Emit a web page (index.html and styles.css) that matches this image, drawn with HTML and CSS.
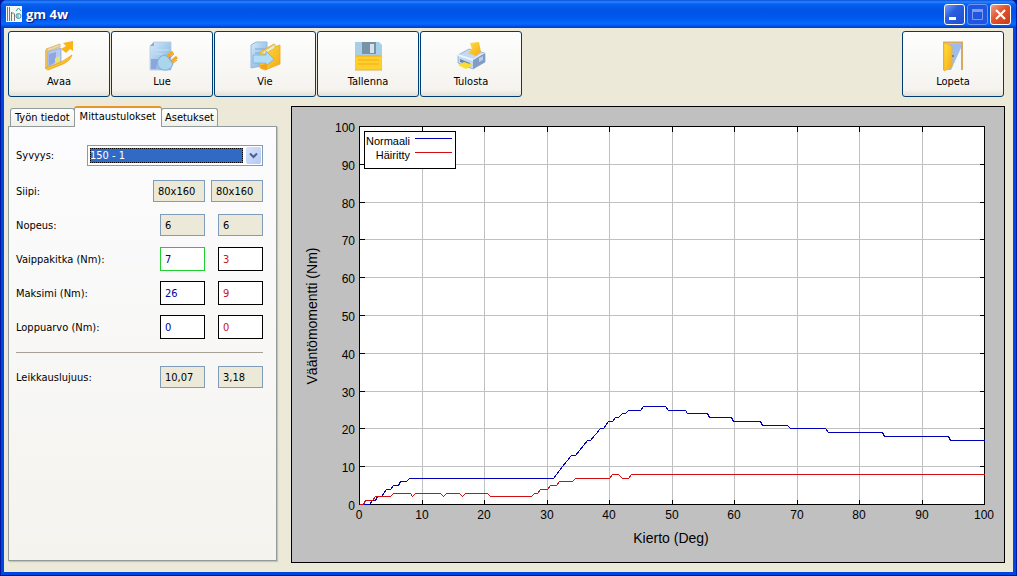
FILE: index.html
```
<!DOCTYPE html>
<html lang="fi">
<head>
  <meta charset="UTF-8">
  <meta name="viewport" content="width=device-width, initial-scale=1.0">
  <title>gm 4w</title>
  <link rel="stylesheet" href="styles.css">
</head>
<body>

  <header class="titlebar">
    <svg class="app-icon" width="16" height="16" viewBox="0 0 16 16">
      <rect width="16" height="16" fill="#f4f6f4"/>
      <path d="M1.500 1v14M3.500 1v14M5.500 6v9M8.500 8v7" stroke="#777" fill="none"/>
      <path d="M5.500 8q2-3 3 1" stroke="#777" fill="none"/>
      <circle cx="12.500" cy="10" r="2.500" stroke="#3d9a9a" fill="none"/>
      <path d="M10 5l2.500-3L15 5M12 8v4" stroke="#3d9a9a" fill="none"/>
    </svg>
    <h1>gm 4w</h1>
    <div class="window-buttons">
      <button type="button" aria-label="Pienennä">
        <svg width="19" height="19" viewBox="0 0 19 19"><rect x="4" y="12" width="7" height="3" fill="#fff"/></svg>
      </button>
      <button type="button" class="disabled" aria-label="Suurenna" disabled>
        <svg width="19" height="19" viewBox="0 0 19 19"><path d="M4.500 5v9.500h10V5" fill="none" stroke="#7c9cf0"/><rect x="4" y="4" width="11" height="3" fill="#7c9cf0"/></svg>
      </button>
      <button type="button" class="close" aria-label="Sulje">
        <svg width="19" height="19" viewBox="0 0 19 19"><path d="M5 5l9 9M14 5l-9 9" stroke="#fff" stroke-width="2.200"/></svg>
      </button>
    </div>
  </header>

  <nav class="toolbar">
    <button type="button">
      <svg width="32" height="32" viewBox="0 0 32 32">
        <defs>
          <linearGradient id="yellow" x1="0" y1="0" x2="1" y2="1"><stop offset="0" stop-color="#ffe23c"/><stop offset="1" stop-color="#f5a81c"/></linearGradient>
          <linearGradient id="blue" x1="0" y1="0" x2="1" y2="1"><stop offset="0" stop-color="#d3ebf8"/><stop offset="1" stop-color="#7aaade"/></linearGradient>
        </defs>
        <path d="M2 10l3-1v20l-3-1z" fill="#f0c050"/>
        <path d="M3 9l14-5v3L6 11z" fill="#ecd9a0" stroke="#cdb070" stroke-width=".8"/>
        <path d="M5 12l13-4v15L5 28z" fill="#b4cbf2" stroke="#94a4dc" stroke-width=".8"/>
        <path d="M6 14l7-2v10l-7 4z" fill="#8fa6e6"/>
        <path d="M12 18l5-2v6l-5 3z" fill="#e6e36c"/>
        <path d="M2 28l3 2 15-6q7-3 9-9-9 7-18 10z" fill="url(#yellow)" stroke="#eda21c" stroke-width=".8"/>
        <path d="M18 9l5-3-3-3 10-2v10l-3-2-4 4z" fill="#fbb416"/>
      </svg>
      <span>Avaa</span>
    </button>
    <button type="button">
      <svg width="32" height="32" viewBox="0 0 32 32">
        <path d="M4 6l4-4h17v28H4z" fill="url(#blue)" stroke="#b4cbe8" stroke-width=".8"/>
        <path d="M4 6h4V2z" fill="#94a9d0"/>
        <path d="M9 10h14M9 14h8" stroke="#c6e2f2"/>
        <path d="M5 19h7l-2 10H5z" fill="#8ea5dc"/>
        <path d="M21 17l6-5M25 22l6-5" stroke="#f5a91c" stroke-width="3"/>
        <path d="M22 19l6-5M26 24l5-4" stroke="#d86e2c" stroke-width=".8"/>
        <path d="M14 17q3-3 7-1l6 8q-1 5-6 6-6 1-9-4-2-5 2-9z" fill="#a9d5ed" stroke="#75a7d5" stroke-width=".8"/>
      </svg>
      <span>Lue</span>
    </button>
    <button type="button">
      <svg width="32" height="32" viewBox="0 0 32 32">
        <path d="M2 5l5-3h11v23l-16 3z" fill="url(#blue)" stroke="#9ab8e0"/>
        <path d="M6 9h11M6 13h8" stroke="#78a8dc"/>
        <path d="M11 12l14-8v3l6-2v19l-15 6-5-2z" fill="url(#yellow)" stroke="#eda822" stroke-width=".8"/>
        <path d="M12 13l14-9v4l-10 6z" fill="#ececc8" stroke="#d7b55c" stroke-width=".8"/>
        <path d="M4 15h13v-4l8 8-8 7v-3H4z" fill="#b2ddf6" stroke="#79aee1" stroke-width=".8"/>
        <path d="M12 25l6-1v6l-6-2z" fill="#f2a31b"/>
      </svg>
      <span>Vie</span>
    </button>
    <button type="button">
      <svg width="32" height="32" viewBox="0 0 32 32">
        <path d="M3 2h24l3 3v25H3z" fill="#a8cfe8"/>
        <path d="M10 2h14v12H10z" fill="#7892a8"/>
        <path d="M18 4h4v9h-4z" fill="#d5e2e9"/>
        <path d="M4 16h25v14H4z" fill="#ffd02b"/>
        <path d="M4 16h25M6 20h21M6 24h21" stroke="#f5a91c"/>
        <path d="M3 30h27" stroke="#d9b050"/>
      </svg>
      <span>Tallenna</span>
    </button>
    <button type="button">
      <svg width="32" height="32" viewBox="0 0 32 32">
        <path d="M3 15l11-6 16 4v9l-12 7L3 23z" fill="#c3d8f2" stroke="#90abd4" stroke-width=".8"/>
        <path d="M15 3l9-1 2 10-5 4-8-3 4-4z" fill="url(#yellow)"/>
        <path d="M3 15l15 5 12-7" fill="none" stroke="#e8f7fb" stroke-width="2"/>
        <path d="M18 20v9l12-7v-9z" fill="#829cc5"/>
        <path d="M24 18l4-2v4l-4 2z" fill="#b8cde7"/>
        <path d="M5 19l10 4v3L5 22z" fill="#6a85b0"/>
        <path d="M3 25l6-3 9 3-7 4z" fill="#f8dc2e"/>
      </svg>
      <span>Tulosta</span>
    </button>
    <button type="button" class="quit">
      <svg width="32" height="32" viewBox="0 0 32 32">
        <path d="M7 30V2.500h18V30" fill="url(#blue)" stroke="#d9a960" stroke-width="2"/>
        <path d="M8 4h16v6L12 28H8z" fill="#9dbcf0"/>
        <path d="M24 8v22H14z" fill="#f2f8fc"/>
        <path d="M7 3l8 3v21l-8 4z" fill="url(#yellow)" stroke="#f2b129" stroke-width=".8"/>
        <circle cx="16" cy="16" r="1" fill="#866e45"/>
      </svg>
      <span>Lopeta</span>
    </button>
  </nav>

  <main class="content">
    <section class="sidebar">
      <div class="tabs" role="tablist">
        <button type="button" role="tab">Työn tiedot</button>
        <button type="button" role="tab" class="active" aria-selected="true">Mittaustulokset</button>
        <button type="button" role="tab">Asetukset</button>
      </div>
      <form class="panel">
        <div class="row depth">
          <label for="syvyys">Syvyys:</label>
          <div class="combo">
            <select id="syvyys"><option>150 - 1</option></select>
            <svg class="combo-arrow" width="15" height="17" viewBox="0 0 15 17"><path d="M4 6.500l3.500 3.500L11 6.500" fill="none" stroke="#4d6185" stroke-width="2"/></svg>
          </div>
        </div>
        <div class="row wide">
          <label for="siipi-1">Siipi:</label>
          <input id="siipi-1" type="text" value="80x160" readonly>
          <input type="text" value="80x160" aria-label="Siipi, häiritty" readonly>
        </div>
        <div class="row">
          <label for="nopeus-1">Nopeus:</label>
          <input id="nopeus-1" type="text" value="6" readonly>
          <input type="text" value="6" aria-label="Nopeus, häiritty" readonly>
        </div>
        <div class="row">
          <label for="vaippa-1">Vaippakitka (Nm):</label>
          <input id="vaippa-1" class="normal selected" type="text" value="7">
          <input class="disturbed" type="text" value="3" aria-label="Vaippakitka, häiritty">
        </div>
        <div class="row">
          <label for="maksimi-1">Maksimi (Nm):</label>
          <input id="maksimi-1" class="normal" type="text" value="26">
          <input class="disturbed" type="text" value="9" aria-label="Maksimi, häiritty">
        </div>
        <div class="row">
          <label for="loppu-1">Loppuarvo (Nm):</label>
          <input id="loppu-1" class="normal" type="text" value="0">
          <input class="disturbed" type="text" value="0" aria-label="Loppuarvo, häiritty">
        </div>
        <hr>
        <div class="row">
          <label for="leikkaus-1">Leikkauslujuus:</label>
          <input id="leikkaus-1" type="text" value="10,07" readonly>
          <input type="text" value="3,18" aria-label="Leikkauslujuus, häiritty" readonly>
        </div>
      </form>
    </section>

    <section class="chart">
      <svg viewBox="0 0 712 455" role="img" aria-label="Vääntömomentti / kierto">
        <rect class="plot" x="67.500" y="19.500" width="625" height="378"/>
        <g id="grid"></g>
        <g id="ticks"></g>
        <rect class="frame" x="67.500" y="19.500" width="625" height="378"/>
        <polyline id="normal" class="series normal-line"/>
        <polyline id="disturbed" class="series disturbed-line"/>
        <g id="labels"></g>
        <rect class="legend-box" x="72.500" y="24.500" width="91" height="37"/>
        <text class="legend-text" x="118" y="38">Normaali</text>
        <text class="legend-text" x="118" y="52">Häiritty</text>
        <path class="series normal-line" d="M123 31.500h37"/>
        <path class="series disturbed-line" d="M123 45.500h37"/>
        <text class="axis-title" x="379" y="436">Kierto (Deg)</text>
        <text class="axis-title" transform="translate(25 209) rotate(-90)">Vääntömomentti (Nm)</text>
      </svg>
    </section>
  </main>

  <script src="chart.js"></script>
</body>
</html>
```
FILE: styles.css
```
:root {
  --face: #ece9d8;
  --frame: #0046e0;
  --frame-dark: #0018a0;
  --field-border: #7f9db9;
  --normal: #0000a8;
  --disturbed: #c81424;
}

* {
  box-sizing: border-box;
}

html {
  background: var(--frame-dark);
}

body {
  margin: 0;
  min-height: 100vh;
  display: flex;
  flex-direction: column;
  padding: 0 3px 3px;
  background: var(--face);
  border: 1px solid var(--frame-dark);
  border-top: 0;
  border-radius: 7px 7px 0 0;
  box-shadow: inset 0 0 0 3px var(--frame);
  font-family: "DejaVu Sans Condensed", "Noto Sans", sans-serif;
  font-size: 11px;
  color: #000;
}

button, input, select {
  font: inherit;
  color: inherit;
}

/* Title bar */
.titlebar {
  display: flex;
  align-items: center;
  height: 28px;
  margin: 0 -4px;
  padding: 0 6px;
  gap: 4px;
  border-radius: 7px 7px 0 0;
  background: linear-gradient(#0a50d8 0, #2a86ff 2px, #0860f0 4px, #0054e6 10px, #0058ee 18px, #0668ff 24px, #0450dc 26px, #003cc0 28px);
}

.titlebar h1 {
  flex: 1;
  margin: 0;
  font: bold 13px "Open Sans", sans-serif;
  color: #fff;
  text-shadow: 1px 1px 1px #0a1883;
}

.window-buttons {
  display: flex;
  gap: 2px;
}

.window-buttons button {
  width: 21px;
  height: 21px;
  padding: 0;
  border: 1px solid #fff;
  border-radius: 3px;
  background: linear-gradient(135deg, #7c9ff5, #2a5fe0 40%, #1d4fd0);
}

.window-buttons svg {
  display: block;
}

.window-buttons .disabled {
  border-color: #6a94f4;
  background: #1f55df;
}

.window-buttons .close {
  border-color: #fff;
  background: linear-gradient(135deg, #f0a088, #e0532c 45%, #c63c18);
}

/* Toolbar */
.toolbar {
  display: flex;
  gap: 1px;
  padding: 3px 9px 9px 4px;
}

.toolbar button {
  display: flex;
  flex-direction: column;
  align-items: center;
  gap: 3px;
  width: 102px;
  height: 66px;
  padding: 8px 0 0;
  border: 1px solid #003c74;
  border-radius: 3px;
  background: linear-gradient(#fefefe, #f4f3ee 90%, #e4e0d6);
}

.toolbar .quit {
  margin-left: auto;
}

/* Layout */
.content {
  flex: 1;
  display: flex;
  align-items: stretch;
  gap: 14px;
  padding: 0 8px 9px 4px;
}

.sidebar {
  flex: 0 0 269px;
  display: flex;
  flex-direction: column;
  padding-bottom: 2px;
}

/* Tabs */
.tabs {
  display: flex;
  align-items: flex-end;
  height: 20px;
  padding-left: 2px;
}

.tabs button {
  height: 18px;
  padding: 0 4px;
  white-space: nowrap;
  border: 1px solid #919b9c;
  border-bottom: 0;
  border-radius: 3px 3px 0 0;
  background: linear-gradient(#fff, #f0efe8);
}

.tabs button:last-child {
  padding: 0 3px;
}

.tabs .active {
  height: 21px;
  margin: 0 -1px -1px;
  padding: 0 5px 3px;
  border-top: 2px solid #e8962c;
  background: #fcfcfe;
  z-index: 1;
}

.panel {
  flex: 1;
  display: flex;
  flex-direction: column;
  gap: 10px;
  padding: 16px 13px 16px 7px;
  border: 1px solid #919b9c;
  box-shadow: 1px 1px 1px #c8c5b4;
  background: linear-gradient(#fcfcfe, #f4f3ee);
}

/* Form rows */
.row {
  display: grid;
  grid-template-columns: 1fr 45px 45px;
  align-items: center;
  column-gap: 13px;
  height: 24px;
}

.row.wide {
  grid-template-columns: 1fr 52px 52px;
  column-gap: 6px;
}

.row.depth {
  grid-template-columns: 1fr 176px;
  column-gap: 0;
  margin-bottom: 2px;
}

.row input {
  width: 100%;
  height: 24px;
  padding: 0 4px;
  border: 1px solid #000;
  background: #fff;
}

.row input:read-only {
  height: 22px;
  border-color: var(--field-border);
  background: var(--face);
}

.row input.normal {
  color: var(--normal);
}

.row input.disturbed {
  color: var(--disturbed);
}

.row input.selected {
  border-color: #20d030;
}

.combo {
  position: relative;
  height: 21px;
}

.combo select {
  width: 100%;
  height: 21px;
  padding: 0 20px 0 2px;
  appearance: none;
  border: 1px solid var(--field-border);
  border-radius: 0;
  color: #fff;
  background: #fff linear-gradient(#316ac5, #316ac5) 2px 2px / calc(100% - 21px) 15px no-repeat;
}

.combo option {
  color: #000;
}

/* dotted focus rectangle around the selected value */
.combo::before {
  content: "";
  position: absolute;
  inset: 3px 20px 3px 3px;
  border: 1px dotted #000;
  pointer-events: none;
}

.combo-arrow {
  position: absolute;
  top: 2px;
  right: 2px;
  border-radius: 2px;
  background: linear-gradient(135deg, #d8e4fd, #b4c8f6);
  pointer-events: none;
}

.panel hr {
  width: 100%;
  height: 1px;
  margin: 3px 0 2px;
  border: 0;
  background: #a5a295;
}

/* Chart */
.chart {
  flex: 1;
  min-width: 0;
  border: 1px solid #000;
  background: #c0c0c0;
}

.chart svg {
  display: block;
  width: 100%;
  font-family: "Liberation Sans", sans-serif;
}

.plot {
  fill: #fff;
}

.frame {
  fill: none;
  stroke: #000;
}

.frame, .grid-line, .tick, .series, .legend-box {
  shape-rendering: crispEdges;
}

.grid-line {
  stroke: #c0c0c0;
}

.tick {
  stroke: #000;
}

.series {
  fill: none;
}

.normal-line {
  stroke: #0000b4;
}

.disturbed-line {
  stroke: #d01010;
}

.legend-box {
  fill: #fff;
  stroke: #000;
}

.legend-text {
  font-size: 11px;
  text-anchor: end;
}

.tick-label {
  font-size: 12px;
  text-anchor: middle;
}

.tick-label.y {
  text-anchor: end;
}

.axis-title {
  font-size: 14px;
  text-anchor: middle;
}
```
FILE: chart.js
```
const LEFT = 67.5, TOP = 19.5, WIDTH = 625, HEIGHT = 378;
const RIGHT = LEFT + WIDTH, BOTTOM = TOP + HEIGHT;

// [degrees, Nm]
const normal = [
  [0, 0], [1.6, 0], [2, 1], [2.5, 1], [2.9, 2], [3.5, 2], [4.3, 4], [5, 4], [5.4, 5], [6.2, 5],
  [6.6, 6], [7.5, 6], [8, 7], [31.1, 7], [32.5, 10], [33.9, 13], [34.5, 13], [36.4, 17], [37, 17],
  [38.5, 20], [39.1, 20], [39.9, 22], [40.5, 22], [40.9, 23], [41.5, 23], [42.1, 24], [42.6, 24],
  [43, 25], [45, 25], [45.4, 26], [49, 26], [49.4, 25], [52.1, 25], [52.5, 24], [55.6, 24],
  [56, 23], [59.5, 23], [59.9, 22], [64.1, 22], [64.5, 21], [68.5, 21], [68.9, 20], [74.6, 20],
  [75.1, 19], [83.6, 19], [84, 18], [94.2, 18], [94.6, 17], [100, 17]
];

const disturbed = [
  [0, 0], [0.6, 0], [1, 1], [2.1, 1], [2.5, 2], [5, 2], [5.4, 3], [8.1, 3], [8.5, 2], [8.9, 3],
  [13, 3], [13.5, 2], [13.9, 3], [16, 3], [16.5, 2], [16.9, 3], [20.5, 3], [20.9, 2], [27.5, 2],
  [28, 3], [28.5, 3], [28.9, 4], [30.1, 4], [30.5, 5], [31.5, 5], [32, 6], [34, 6], [34.5, 7],
  [40, 7], [40.5, 8], [41.5, 8], [42.1, 7], [43, 7], [43.5, 8], [100, 8]
];

// snap to pixel centres so the lines stay sharp
const snap = v => Math.floor(v) + 0.5;
const px = deg => snap(LEFT + deg * WIDTH / 100);
const py = nm => snap(BOTTOM - nm * HEIGHT / 100);

let grid = "", ticks = "", labels = "";

for (let v = 0; v <= 100; v += 10) {
  const x = px(v), y = py(v);
  if (v > 0 && v < 100) {
    grid += `<path class="grid-line" d="M${x} ${TOP}V${BOTTOM}M${LEFT} ${y}H${RIGHT}"/>`;
    ticks += `<path class="tick" d="M${x} ${TOP}v5M${x} ${BOTTOM}v-5M${LEFT} ${y}h5M${RIGHT} ${y}h-5"/>`;
  }
  labels += `<text class="tick-label" x="${x - 0.5}" y="412">${v}</text>`;
  labels += `<text class="tick-label y" x="63" y="${y + 5.5}">${v}</text>`;
}

document.getElementById("grid").innerHTML = grid;
document.getElementById("ticks").innerHTML = ticks;
document.getElementById("labels").innerHTML = labels;

const toPoints = data => data.map(([deg, nm]) => `${px(deg)},${py(nm)}`).join(" ");
document.getElementById("normal").setAttribute("points", toPoints(normal));
document.getElementById("disturbed").setAttribute("points", toPoints(disturbed));
```
